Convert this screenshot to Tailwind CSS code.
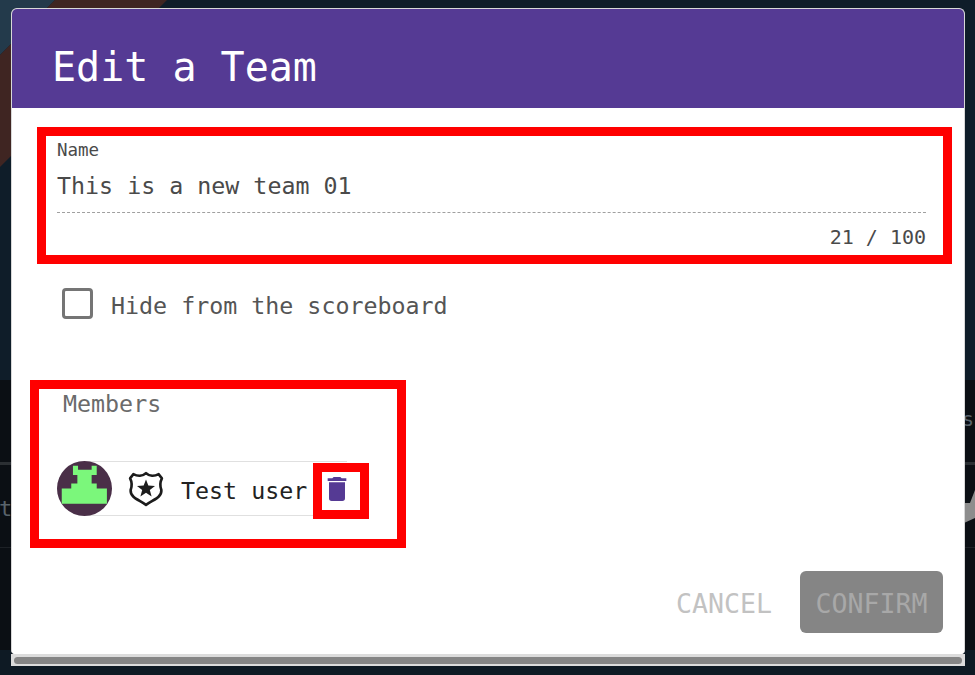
<!DOCTYPE html>
<html lang="en">
<head>
  <meta charset="UTF-8" />
  <title>Edit a Team</title>
  <script src="https://cdn.jsdelivr.net/npm/@tailwindcss/browser@4"></script>
</head>
<body class="bg-[#0b1016] font-['DejaVu_Sans_Mono',monospace]">
  <div class="relative w-[975px] h-[675px] overflow-hidden pt-2 pl-[11px]">

    <!-- page behind the dialog -->
    <svg class="absolute inset-0" width="975" height="675" viewBox="0 0 975 675">
      <rect width="975" height="380" fill="#0f1d29" />
      <rect y="380" width="975" height="270" fill="#0b0f14" />
      <rect y="650" width="975" height="25" fill="#0e1a24" />
      <polygon points="0,0 55,0 0,55" fill="#233a4b" />
      <polygon points="55,0 167,0 0,167 0,55" fill="#3f2522" />
      <rect y="462" width="975" height="3" fill="#2b2f33" />
      <rect y="547" width="975" height="1" fill="#1d2126" />
      <polygon points="975,490 970,503 964,503 964,523 975,518" fill="#8d8d8d" />
      <text x="-1" y="516" font-size="22" fill="#59636b">t</text>
      <text x="962" y="426" font-size="20" fill="#59636b">s</text>
    </svg>

    <!-- dialog -->
    <div class="relative w-[954px] flex flex-col">
      <div class="bg-white rounded-t-[6px] rounded-b-[4px] border-t border-x border-[#d8d8d8] overflow-hidden">
        <h1 class="h-[99px] bg-[#553a94] text-white text-[40px] leading-[48px] pt-[34px] pl-[40px]">Edit a Team</h1>

        <div class="h-[546px] bg-white flex flex-col">
          <div class="mt-[32px] ml-[45px] mr-[38px]">
            <div class="text-[17.5px] leading-5 text-[#4a4a4a]">Name</div>
            <div class="mt-[9px] h-[44px] text-[23.3px] leading-[34px] text-[#4a4a4a] border-b border-dashed border-[#a0a0a0]">This is a new team 01</div>
            <div class="mt-[12px] text-[20px] leading-[24px] text-right text-[#4a4a4a]">21 / 100</div>
          </div>

          <label class="mt-[38px] ml-[50px] flex items-center gap-[18px] h-[32px] text-[23.3px] text-[#555555]">
            <span class="w-[31px] h-[31px] rounded-[4px] border-[3px] border-[#757575] bg-white"></span>
            <span class="pt-[6px]">Hide from the scoreboard</span>
          </label>

          <div class="mt-[69px] ml-[51px] text-[23.3px] leading-[32px] text-[#6b6b6b]">Members</div>

          <div class="mt-[41px] ml-[45px] w-[290px] h-[55px] flex items-center rounded-l-full border-y border-l border-[#e0e0e0]">
            <svg class="-ml-px shrink-0" width="55" height="55" viewBox="8 4 162 162">
              <circle cx="89" cy="85" r="81" fill="#4a2f48" />
              <polygon points="55,18 70,18 70,30 110,30 110,18 125,18 125,45 110,45 110,70 125,70 125,85 155,85 155,130 22,130 22,85 50,85 50,70 68,70 68,45 55,45" fill="#7bf77b" />
            </svg>
            <svg class="ml-[16px] shrink-0" width="36" height="36" viewBox="0 0 34 34">
              <path d="M17 2 C20 5 25 5 29 3 L32 7 C30 11 30 14 31.5 18 C32 25 24 27 17 32 C10 27 2 25 2.5 18 C4 14 4 11 2 7 L5 3 C9 5 14 5 17 2Z" fill="#ffffff" stroke="#1c1c1c" stroke-width="2.5" stroke-linejoin="round" />
              <polygon points="17,8 19.2,13.8 25.5,14.1 20.6,18 22.3,24 17,20.6 11.7,24 13.4,18 8.5,14.1 14.8,13.8" fill="#1c1c1c" />
            </svg>
            <span class="ml-[17px] pt-[6px] whitespace-nowrap text-[23.3px] text-[#222222]">Test user</span>
            <svg class="ml-[14px] shrink-0 text-[#553a94]" width="32" height="32" viewBox="0 0 24 24" fill="currentColor">
              <path d="M19,4H15.5L14.5,3H9.5L8.5,4H5V6H19M6,19A2,2 0 0,0 8,21H16A2,2 0 0,0 18,19V7H6V19Z" />
            </svg>
          </div>

          <div class="mt-[55px] mr-[21px] flex items-center justify-end gap-[28px]">
            <button class="pt-1 text-[26.6px] text-[#c2c2c2]">CANCEL</button>
            <button class="w-[143px] h-[62px] pt-1 rounded-[6px] bg-[#858585] text-[26.6px] text-[#a8a8a8]">CONFIRM</button>
          </div>
        </div>
      </div>
      <div class="h-[12px] bg-[#dcdcdc] flex items-center px-[3px]">
        <div class="w-full h-[7px] rounded-full bg-[#858585]"></div>
      </div>
    </div>

    <!-- review annotations -->
    <div class="absolute left-[37px] top-[127px] w-[915px] h-[137px] border-[9px] border-[#ff0000]"></div>
    <div class="absolute left-[30px] top-[380px] w-[376px] h-[168px] border-[9px] border-[#ff0000]"></div>
    <div class="absolute left-[313px] top-[463px] w-[56px] h-[56px] border-[9px] border-[#ff0000]"></div>
  </div>
</body>
</html>
